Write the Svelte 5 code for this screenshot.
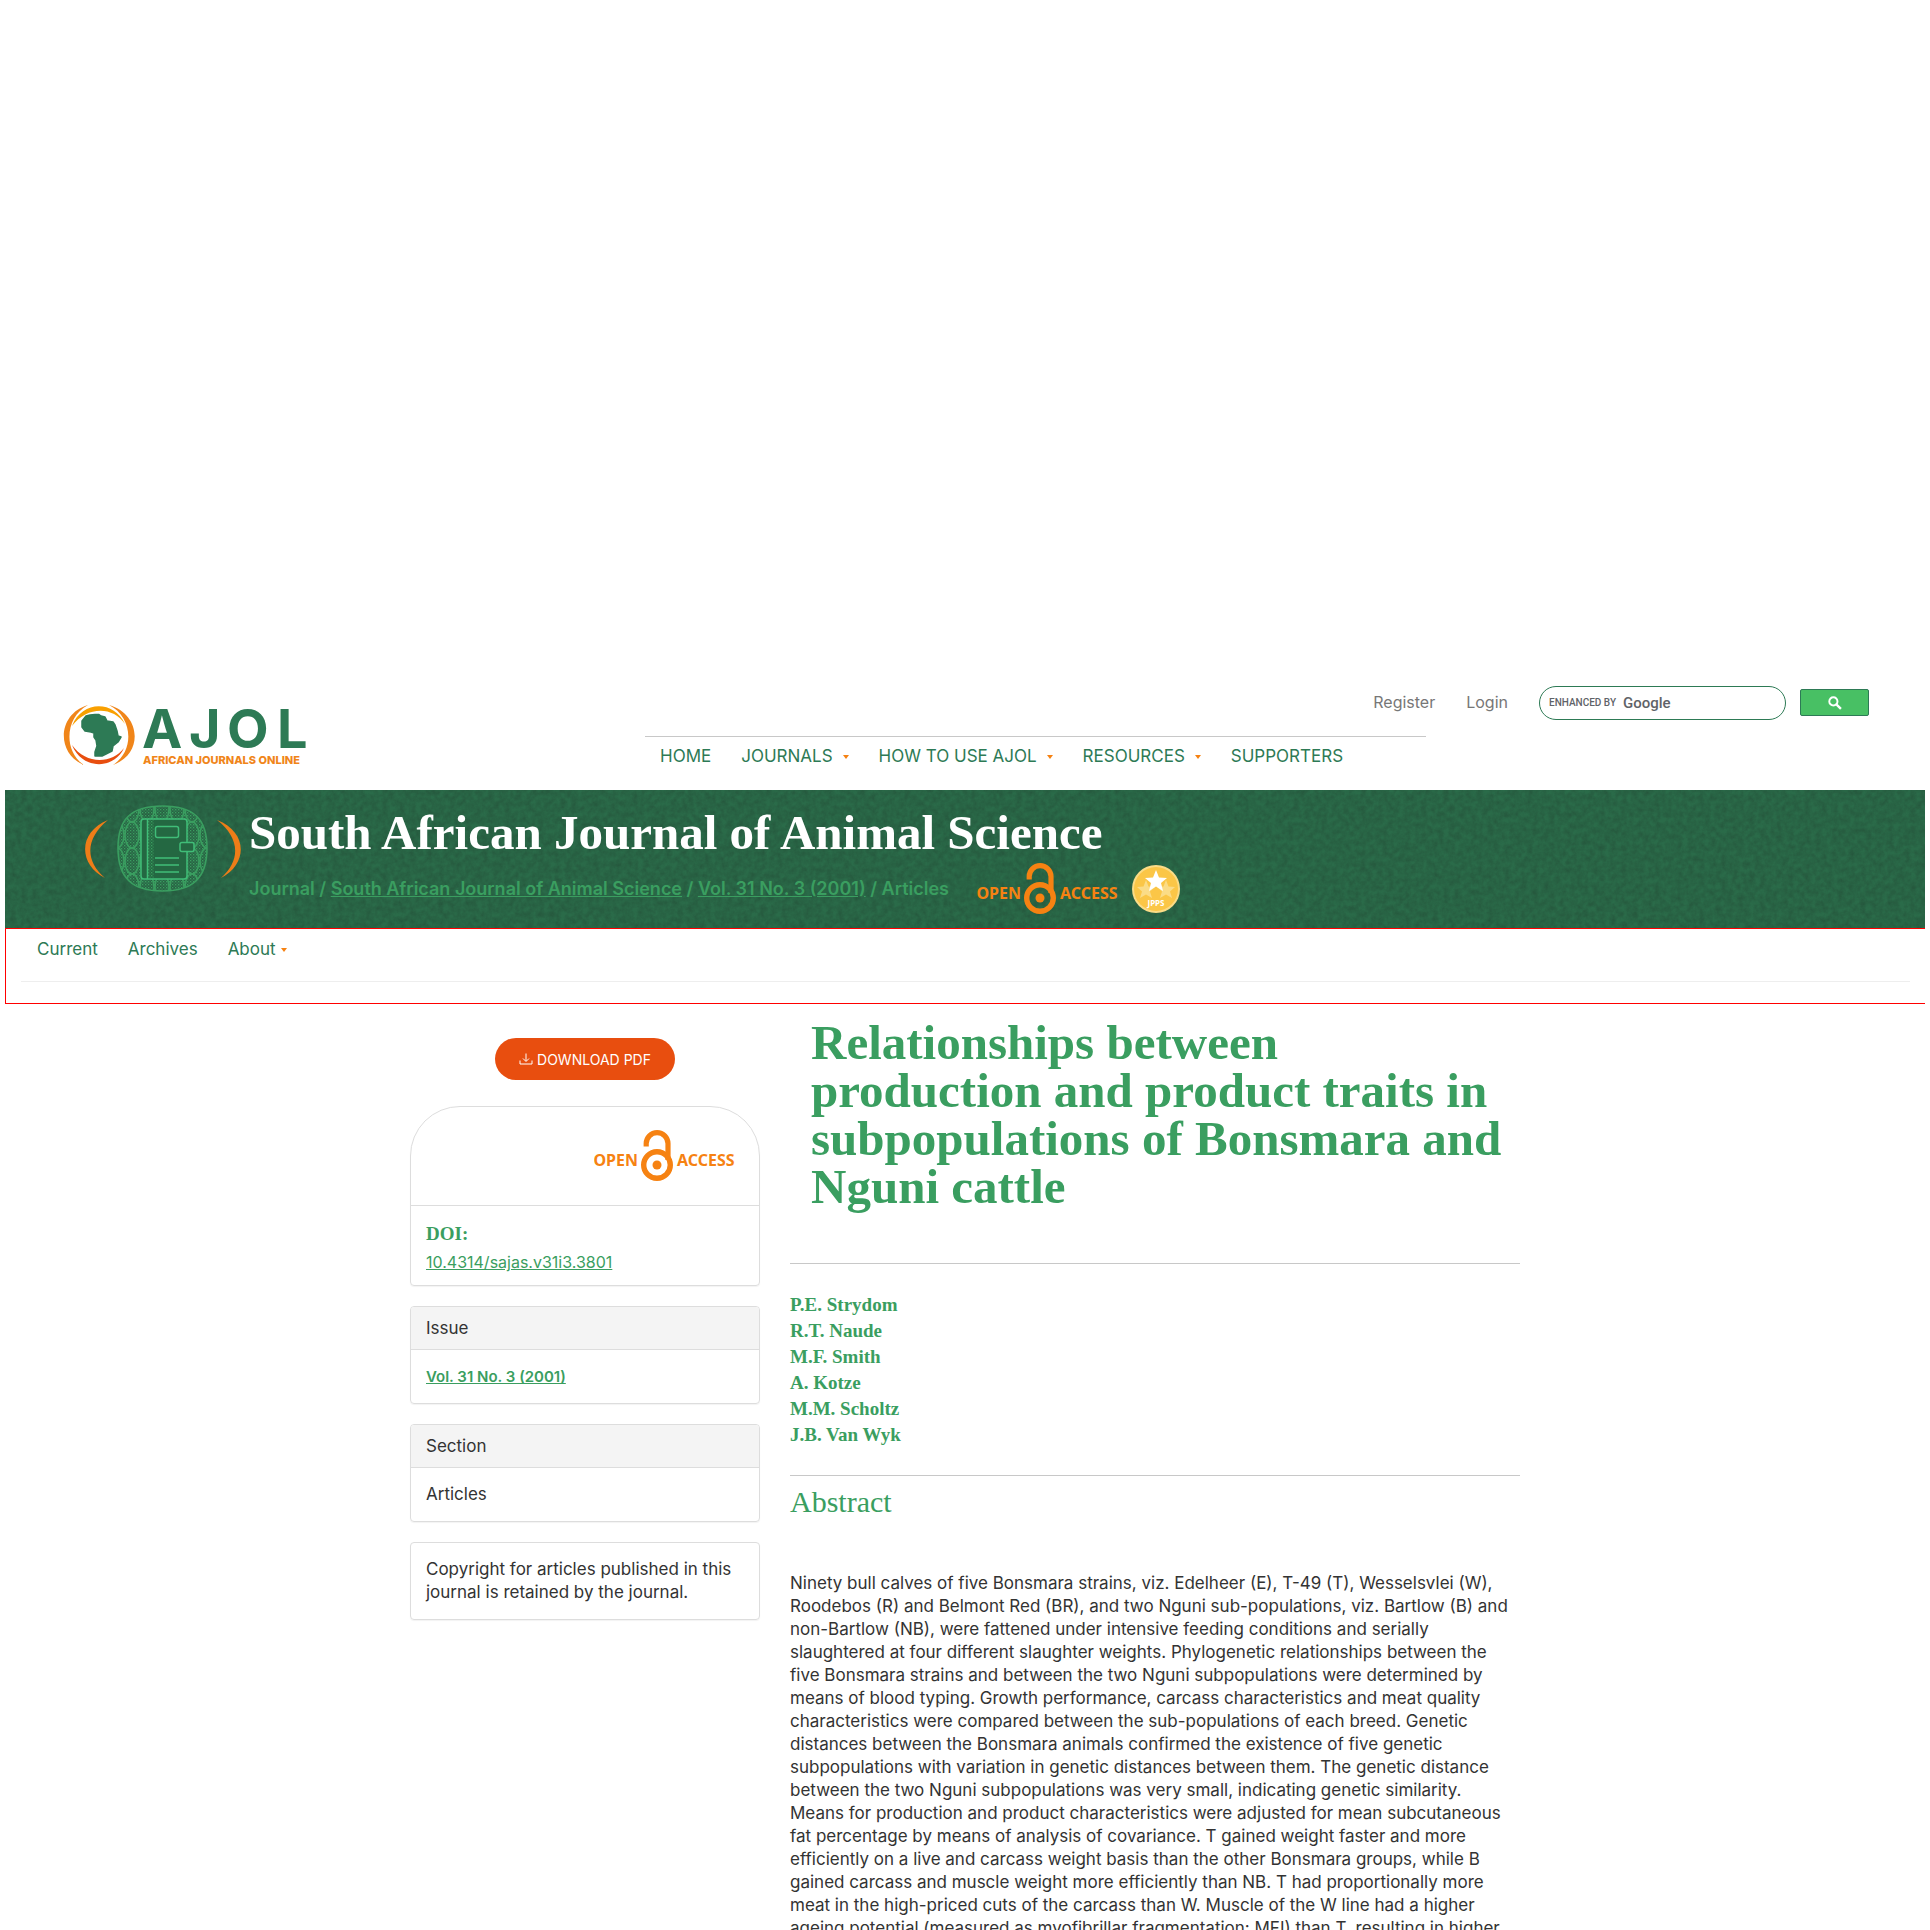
<script>
  const nav = [
    { label: 'HOME', menu: false },
    { label: 'JOURNALS', menu: true },
    { label: 'HOW TO USE AJOL', menu: true },
    { label: 'RESOURCES', menu: true },
    { label: 'SUPPORTERS', menu: false }
  ];
  const authors = ['P.E. Strydom', 'R.T. Naude', 'M.F. Smith', 'A. Kotze', 'M.M. Scholtz', 'J.B. Van Wyk'];
  const titleLines = ['Relationships between', 'production and product traits in', 'subpopulations of Bonsmara and', 'Nguni cattle'];
  const abstractLines = [
    'Ninety bull calves of five Bonsmara strains, viz. Edelheer (E), T-49 (T), Wesselsvlei (W),',
    'Roodebos (R) and Belmont Red (BR), and two Nguni sub-populations, viz. Bartlow (B) and',
    'non-Bartlow (NB), were fattened under intensive feeding conditions and serially',
    'slaughtered at four different slaughter weights. Phylogenetic relationships between the',
    'five Bonsmara strains and between the two Nguni subpopulations were determined by',
    'means of blood typing. Growth performance, carcass characteristics and meat quality',
    'characteristics were compared between the sub-populations of each breed. Genetic',
    'distances between the Bonsmara animals confirmed the existence of five genetic',
    'subpopulations with variation in genetic distances between them. The genetic distance',
    'between the two Nguni subpopulations was very small, indicating genetic similarity.',
    'Means for production and product characteristics were adjusted for mean subcutaneous',
    'fat percentage by means of analysis of covariance. T gained weight faster and more',
    'efficiently on a live and carcass weight basis than the other Bonsmara groups, while B',
    'gained carcass and muscle weight more efficiently than NB. T had proportionally more',
    'meat in the high-priced cuts of the carcass than W. Muscle of the W line had a higher',
    'ageing potential (measured as myofibrillar fragmentation: MFI) than T, resulting in higher'
  ];
  const ovalColumns = [0, 1, 2, 3, 4, 5, 6];
  const ovalRows = [0, 1, 2, 3];
  const medalPath = 'M77.5 6C110 6 122 20 122 48C122 78 108 91 77.5 91C47 91 33 78 33 48C33 20 45 6 77.5 6Z';
</script>

{#snippet openAccess()}
  <svg class="open-access" viewBox="0 0 142 52" role="img" aria-label="Open Access">
    <g fill="none" stroke="#f68212">
      <circle cx="63" cy="35" r="13.3" stroke-width="5.4" />
      <path d="M52.2 16.5V13.5a10.900 10.900 0 0 1 21.800 0V30" stroke-width="5.2" />
    </g>
    <circle cx="63" cy="35" r="4.5" fill="#f68212" />
    <text x="44" y="36" text-anchor="end">OPEN</text>
    <text x="83" y="36">ACCESS</text>
  </svg>
{/snippet}

<div class="page">
  <header class="site-header">
    <a class="brand" href="#home" aria-label="AJOL African Journals Online">
      <svg viewBox="0 0 256 66" width="256" height="66">
        <g fill="#f08519">
          <path d="M24 2C-7 11-8 51 20 62C-1 48 1 14 24 2Z" />
          <path d="M45 2C77 11 80 51 49 62C71 48 69 14 45 2Z" />
        </g>
        <path d="M8 23C18-3 50-3 61 21C49 3 23 3 8 23Z" fill="#f9a000" />
        <path d="M8 42C18 67 50 67 60 45C48 61 22 62 8 42Z" fill="#e84e0f" />
        <path
          d="M22 13L26 12L31 11.500L35 11.500L37 13L41 14L43 18L49 19L51 22L53 28L54 33L57 34L54 39L49 43L48 48L42 51L38 53L31 53L31 49L33 43L32 37L30 34L30 30L27 29L21 28L18 24L18 18Z"
          fill="#2d7a55"
          stroke="#2d7a55"
          stroke-width="1.500"
          stroke-linejoin="round"
        />
        <text class="word" x="78 125 163 213" y="45">AJOL</text>
        <text class="tag" x="79" y="61">AFRICAN JOURNALS ONLINE</text>
      </svg>
    </a>
    <div class="header-main">
      <div class="utility">
        <a href="#register">Register</a>
        <a href="#login">Login</a>
        <form class="search">
          <label class="search-box">
            <span class="enhanced">ENHANCED BY</span>
            <span class="google">Google</span>
            <input type="text" name="q" aria-label="Search" />
          </label>
          <button type="button" class="search-btn" aria-label="Search">
            <svg viewBox="0 0 13 13" width="14" height="14">
              <circle cx="5" cy="5" r="3.8" fill="none" stroke="#fff" stroke-width="1.8" />
              <path d="M8 8L12 12" stroke="#fff" stroke-width="2.2" />
            </svg>
          </button>
        </form>
      </div>
      <nav class="primary">
        {#each nav as item}
          <a href="#nav">{item.label}{#if item.menu}<i class="caret"></i>{/if}</a>
        {/each}
      </nav>
    </div>
  </header>

  <section class="banner">
    <svg class="texture" aria-hidden="true">
      <filter id="grain" x="0" y="0" width="100%" height="100%" color-interpolation-filters="sRGB">
        <feTurbulence type="fractalNoise" baseFrequency="0.18" numOctaves="4" seed="4" />
        <feColorMatrix values="0 0 0 0 0.13  0 0 0 0 0.28  0 0 0 0 0.2  0.8 0 0 0 -0.2" />
      </filter>
      <rect width="100%" height="100%" filter="url(#grain)" />
    </svg>
    <svg class="emblem" viewBox="0 0 156 100" width="156" height="100" aria-hidden="true">
      <defs>
        <clipPath id="medal"><path d={medalPath} /></clipPath>
        <pattern id="dots" width="3" height="3" patternUnits="userSpaceOnUse">
          <rect width="1.3" height="1.3" fill="#3a9e60" />
          <rect x="1.6" y="1.6" width="1" height="1" fill="#3a9e60" />
        </pattern>
      </defs>
      <path d="M23 20C-7 32-7 64 20 78C-1 60 1 38 23 20Z" fill="#ee7d18" />
      <path d="M132 20C163 32 163 64 136 78C156 60 155 38 132 20Z" fill="#ee7d18" />
      <g clip-path="url(#medal)" fill="none" stroke="#3a9e60">
        <rect x="32" y="5" width="92" height="87" fill="url(#dots)" stroke="none" />
        {#each ovalColumns as c}
          {#each ovalRows as r}
            <ellipse cx={32 + c * 15} cy={9 + r * 26} rx="7" ry="13" stroke-width="1.6" />
          {/each}
        {/each}
      </g>
      <path d={medalPath} fill="none" stroke="#3a9e60" stroke-width="1.6" />
      <g fill="#246842" stroke="#40bd78" stroke-width="1.5">
        <rect x="56" y="19" width="46" height="60" rx="3" />
        <rect x="70.500" y="26.500" width="23" height="11" rx="2" />
        <rect x="95" y="42.500" width="14" height="9" rx="2" />
        <path d="M62.500 19V79M70 58H94M70 65H94M70 72H94" />
      </g>
      <rect x="63" y="20" width="6" height="58" fill="url(#dots)" />
    </svg>
    <div class="banner-text">
      <h1>South African Journal of Animal Science</h1>
      <div class="crumb-row">
        <p class="crumbs">
          Journal / <a href="#journal">South African Journal of Animal Science</a> /
          <a href="#issue">Vol. 31 No. 3 (2001)</a> / Articles
        </p>
        {@render openAccess()}
        <svg class="jpps" viewBox="0 0 48 48" width="48" height="48" role="img" aria-label="JPPS">
          <circle cx="24" cy="24" r="24" fill="#fbdc87" />
          <circle cx="24" cy="24" r="22" fill="#fbc647" />
          <g fill="#fbdc87">
            <path d="M14 15L16.500 21.500L23 22L18 26.500L20 33L14 29.500L8 33L10 26.500L5 22L11.500 21.500Z" />
            <path d="M34 15L36.500 21.500L43 22L38 26.500L40 33L34 29.500L28 33L30 26.500L25 22L31.500 21.500Z" />
          </g>
          <path d="M24 5L27 12.500L35 13L29 18L31 26L24 21.500L17 26L19 18L13 13L21 12.500Z" fill="#fff" />
          <text x="24" y="41" text-anchor="middle">JPPS</text>
        </svg>
      </div>
    </div>
  </section>

  <nav class="journal-nav">
    <div class="journal-links">
      <a href="#current">Current</a>
      <a href="#archives">Archives</a>
      <a href="#about">About<i class="caret"></i></a>
    </div>
  </nav>

  <main>
    <aside>
      <a class="download" href="#pdf">
        <svg viewBox="0 0 14 12" width="14" height="12" aria-hidden="true">
          <path d="M1 7.500V11H13V7.500M7 0.500V8M4 5.500L7 8.500L10 5.500" fill="none" stroke="#fff" />
        </svg>
        DOWNLOAD PDF
      </a>
      <section class="card doi">
        <div class="card-logo">{@render openAccess()}</div>
        <div class="card-body">
          <h2>DOI:</h2>
          <a href="#doi">10.4314/sajas.v31i3.3801</a>
        </div>
      </section>
      <section class="card">
        <div class="card-head">Issue</div>
        <div class="card-body"><a class="strong" href="#issue">Vol. 31 No. 3 (2001)</a></div>
      </section>
      <section class="card">
        <div class="card-head">Section</div>
        <div class="card-body">Articles</div>
      </section>
      <section class="card">
        <div class="card-body">Copyright for articles published in this journal is retained by the journal.</div>
      </section>
    </aside>

    <article>
      <h2 class="title">{#each titleLines as line}<span>{line} </span>{/each}</h2>
      <ul class="authors">
        {#each authors as author}<li>{author}</li>{/each}
      </ul>
      <h3>Abstract</h3>
      <p class="abstract">{#each abstractLines as line}<span>{line} </span>{/each}</p>
    </article>
  </main>
</div>

<style>
  :global(body) {
    margin: 0;
    background: #fff;
  }
  .page {
    box-sizing: border-box;
    height: 100vh;
    overflow: hidden;
    padding: 685px 5px 0;
    font-family: Inter, 'Open Sans', sans-serif;
    font-size: 17px;
    line-height: 23px;
    color: #333;
  }
  .page * {
    box-sizing: border-box;
  }
  a {
    color: #3a9e60;
  }
  .caret {
    display: inline-block;
    border: 3px solid transparent;
    border-top: 4px solid #f68212;
    border-bottom: 0;
    vertical-align: middle;
  }

  .site-header {
    display: grid;
    grid-template-columns: 1fr 2fr;
    height: 105px;
  }
  .brand {
    padding: 18px 0 0 59px;
  }
  .brand svg {
    display: block;
    overflow: visible;
  }
  .word {
    font-size: 54px;
    font-weight: 700;
    fill: #2d7a55;
  }
  .tag {
    font-size: 11px;
    font-weight: 800;
    fill: #f08519;
  }
  .utility {
    display: flex;
    justify-content: flex-end;
    align-items: center;
    gap: 31px;
    height: 35px;
    padding-right: 56px;
    font-size: 16px;
  }
  .utility a {
    color: #777;
    text-decoration: none;
  }
  .search {
    display: flex;
    align-items: center;
    gap: 14px;
  }
  .search-box {
    display: flex;
    align-items: center;
    gap: 7px;
    width: 247px;
    height: 34px;
    padding: 0 9px;
    border: 1px solid #2d7a55;
    border-radius: 17px;
    color: #5f6368;
  }
  .search-box input {
    flex: 1;
    min-width: 0;
    border: 0;
    outline: 0;
    background: none;
  }
  .enhanced {
    font: 500 10px Roboto, sans-serif;
    white-space: nowrap;
  }
  .google {
    font: 500 15px Roboto, sans-serif;
  }
  .search-btn {
    display: flex;
    align-items: center;
    justify-content: center;
    width: 69px;
    height: 27px;
    padding: 0;
    border: 1px solid #2d7a55;
    border-radius: 2px;
    background: #48c064;
  }
  .primary {
    display: flex;
    gap: 30px;
    width: 61%;
    margin-top: 16px;
    padding: 8px 15px 0;
    border-top: 1px solid #c8c8c8;
  }
  .primary a {
    color: #2d7a55;
    text-decoration: none;
    white-space: nowrap;
  }
  .primary .caret {
    margin-left: 10px;
  }

  .banner {
    position: relative;
    display: flex;
    height: 138px;
    padding-left: 80px;
    background: #2a6b49;
  }
  .texture {
    position: absolute;
    inset: 0;
    width: 100%;
    height: 100%;
  }
  .emblem {
    position: relative;
    margin-top: 10px;
  }
  .banner-text {
    position: relative;
    padding: 18px 0 0 8px;
  }
  h1,
  h2,
  h3,
  .authors {
    margin: 0;
    font-family: 'Liberation Serif', serif;
  }
  h1 {
    font-size: 49px;
    line-height: 50px;
    color: #fff;
  }
  .crumb-row {
    display: flex;
    align-items: center;
    height: 61px;
  }
  .crumbs {
    margin: 0 28px 0 0;
    font-size: 18px;
    font-weight: 600;
    color: #3a9e60;
    white-space: nowrap;
  }
  .open-access {
    width: 142px;
    height: 52px;
  }
  .open-access text {
    font: 700 16px 'Noto Sans', sans-serif;
    fill: #f68212;
  }
  .jpps {
    margin-left: 13px;
  }
  .jpps text {
    font: 700 8px 'Noto Sans', sans-serif;
    fill: #fff;
  }

  .journal-nav {
    height: 76px;
    padding: 0 15px;
    border: 1px solid #f00;
    border-right: 0;
  }
  .journal-links {
    display: flex;
    gap: 30px;
    padding: 9px 16px 20px;
    border-bottom: 1px solid #eee;
  }
  .journal-links a {
    color: #2d7a55;
    text-decoration: none;
  }
  .journal-links .caret {
    margin-left: 5px;
  }

  main {
    display: grid;
    grid-template-columns: minmax(0, 35fr) minmax(0, 73fr);
    column-gap: 30px;
    max-width: 1110px;
    margin: 0 auto;
  }
  aside {
    display: flex;
    flex-direction: column;
    gap: 20px;
    padding-top: 34px;
  }
  .download {
    display: flex;
    align-items: center;
    justify-content: center;
    gap: 4px;
    align-self: center;
    width: 180px;
    height: 42px;
    margin-bottom: 6px;
    border-radius: 21px;
    background: #e84e0f;
    color: #fff;
    font-size: 14px;
    text-decoration: none;
  }
  .card {
    border: 1px solid #ddd;
    border-radius: 4px;
    overflow: hidden;
    box-shadow: 0 1px 1px rgba(0, 0, 0, 0.05);
  }
  .doi {
    border-radius: 50px 50px 4px 4px;
  }
  .card-logo {
    display: flex;
    justify-content: flex-end;
    padding: 23px;
    border-bottom: 1px solid #ddd;
  }
  .card-head {
    padding: 10px 15px 9px;
    background: #f4f4f4;
    border-bottom: 1px solid #ddd;
  }
  .card-body {
    padding: 15px;
  }
  .doi .card-body {
    padding-bottom: 11px;
    font-size: 16px;
  }
  .doi h2 {
    margin-bottom: 4px;
    font-size: 19px;
    line-height: 26px;
    color: #3a9e60;
  }
  .strong {
    font-size: 15px;
    font-weight: 600;
  }

  .title {
    padding: 15px 21px 52px;
    margin-bottom: 28px;
    border-bottom: 1px solid #c8c8c8;
    font-size: 49px;
    line-height: 48px;
    color: #3a9e60;
  }
  .title span,
  .abstract span {
    display: block;
    white-space: nowrap;
  }
  .authors {
    padding: 0 0 27px;
    border-bottom: 1px solid #c8c8c8;
    list-style: none;
    font-size: 19px;
    font-weight: 700;
    line-height: 26px;
    color: #3a9e60;
  }
  h3 {
    margin-top: 12px;
    font-size: 30px;
    font-weight: 400;
    line-height: 28px;
    color: #3a9e60;
  }
  .abstract {
    margin: 56px 0 0;
  }
</style>
